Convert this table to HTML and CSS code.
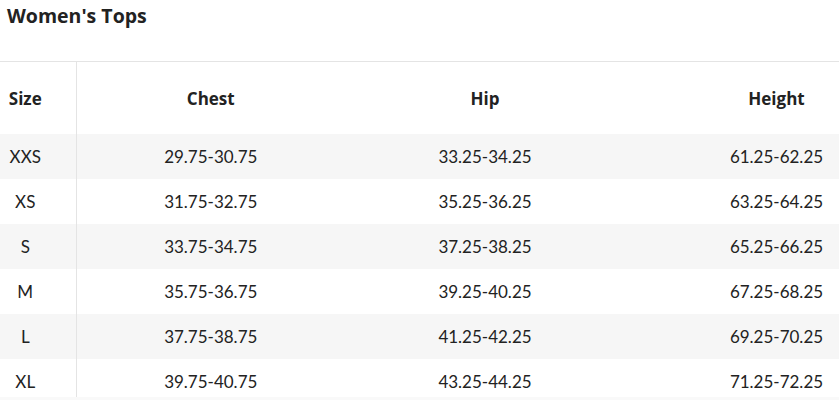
FILE: index.html
```html
<!DOCTYPE html>
<html lang="en">
<head>
<meta charset="utf-8">
<title>Women's Tops</title>
<link rel="stylesheet" href="styles.css">
</head>
<body>
<h2 class="title">Women's Tops</h2>
<div class="table-wrap">
  <table class="size-table">
    <colgroup>
      <col class="c-size"><col class="c-chest"><col class="c-hip"><col class="c-height">
    </colgroup>
    <thead>
      <tr><th class="size">Size</th><th>Chest</th><th>Hip</th><th>Height</th></tr>
    </thead>
    <tbody>
      <tr><td class="size">XXS</td><td>29.75-30.75</td><td>33.25-34.25</td><td>61.25-62.25</td></tr>
      <tr><td class="size">XS</td><td>31.75-32.75</td><td>35.25-36.25</td><td>63.25-64.25</td></tr>
      <tr><td class="size">S</td><td>33.75-34.75</td><td>37.25-38.25</td><td>65.25-66.25</td></tr>
      <tr><td class="size">M</td><td>35.75-36.75</td><td>39.25-40.25</td><td>67.25-68.25</td></tr>
      <tr><td class="size">L</td><td>37.75-38.75</td><td>41.25-42.25</td><td>69.25-70.25</td></tr>
      <tr><td class="size">XL</td><td>39.75-40.75</td><td>43.25-44.25</td><td>71.25-72.25</td></tr>
    </tbody>
  </table>
</div>
<div class="scroll-track"></div>
</body>
</html>
```
FILE: styles.css
```css
html, body {
  margin: 0;
  padding: 0;
  background: #fff;
  overflow: hidden;
}
body {
  font-family: "Lato", "Liberation Sans", sans-serif;
  color: #222;
  width: 839px;
}
.title {
  margin: 0 0 33px 0;
  padding: 4px 0 0 7px;
  height: 24px;
  font-family: "Open Sans", "Liberation Sans", sans-serif;
  font-size: 19.5px;
  line-height: 24px;
  font-weight: 700;
  color: #222;
}
.table-wrap {
  height: 335px;
  overflow: hidden;
  border-top: 1px solid #e4e4e4;
}
.size-table {
  border-collapse: collapse;
  table-layout: fixed;
  width: 928px;
}
.c-size { width: 76px; }
.c-chest { width: 269px; }
.c-hip { width: 280px; }
.c-height { width: 303px; }
.size-table th,
.size-table td {
  text-align: center;
  padding: 0;
  font-size: 17px;
  color: #222;
}
.size-table th {
  height: 72px;
  font-family: "Open Sans", "Liberation Sans", sans-serif;
  font-weight: 700;
}
.size-table td {
  height: 45px;
  font-weight: 400;
}
.size-table .size {
  border-right: 1px solid #e4e4e4;
  padding: 0 32px 0 7px;
}
.size-table tbody tr:nth-child(odd) {
  background: #f6f6f6;
}
.scroll-track {
  height: 10px;
  background: #f9f9f9;
}
```
